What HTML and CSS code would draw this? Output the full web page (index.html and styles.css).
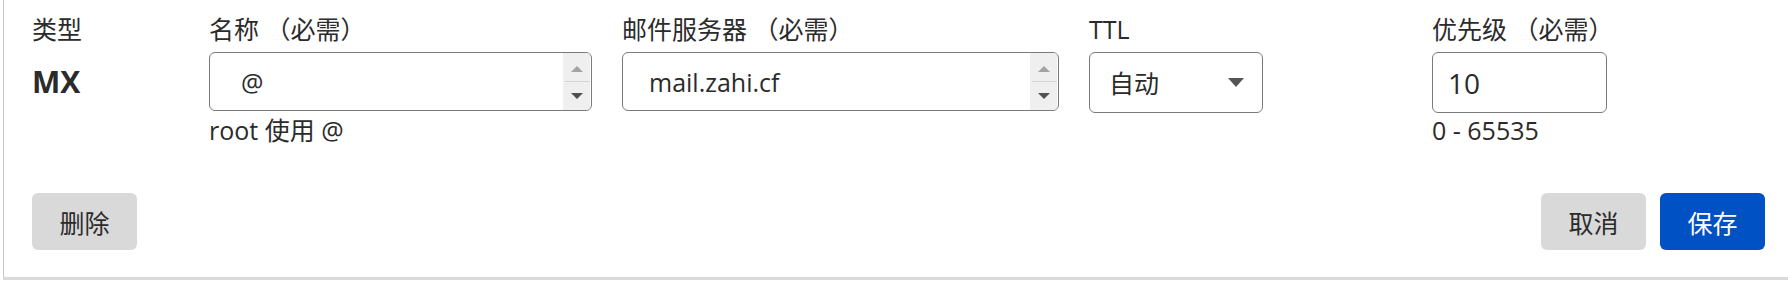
FILE: index.html
```html
<!DOCTYPE html>
<html lang="zh-CN">
<head>
    <meta charset="UTF-8">
    <meta name="viewport" content="width=device-width, initial-scale=1.0">
    <title>编辑 MX 记录</title>
    <link rel="stylesheet" href="styles.css">
</head>
<body>
    <div class="record-card">
        <div class="record-grid">
            <div class="field-label">类型</div>
            <div class="field-label">名称 （必需）</div>
            <div class="field-label">邮件服务器 （必需）</div>
            <div class="field-label">TTL</div>
            <div class="field-label">优先级 （必需）</div>

            <div class="record-type">MX</div>
            <div class="spin-field">
                <input type="text" value="@">
                <div class="spinner">
                    <span class="spin-btn spin-up">
                        <svg width="12" height="6" viewBox="0 0 12 6"><path d="M6 0 L12 6 H0 Z"/></svg>
                    </span>
                    <span class="spin-btn spin-down">
                        <svg width="12" height="6" viewBox="0 0 12 6"><path d="M0 0 H12 L6 6 Z"/></svg>
                    </span>
                </div>
            </div>
            <div class="spin-field spin-field-mail">
                <input type="text" value="mail.zahi.cf">
                <div class="spinner">
                    <span class="spin-btn spin-up">
                        <svg width="12" height="6" viewBox="0 0 12 6"><path d="M6 0 L12 6 H0 Z"/></svg>
                    </span>
                    <span class="spin-btn spin-down">
                        <svg width="12" height="6" viewBox="0 0 12 6"><path d="M0 0 H12 L6 6 Z"/></svg>
                    </span>
                </div>
            </div>
            <div>
                <div class="select-field">
                    <span>自动</span>
                    <svg width="16" height="9" viewBox="0 0 16 9"><path d="M0 0 H16 L8 9 Z"/></svg>
                </div>
            </div>
            <div>
                <input class="text-field" type="text" value="10">
            </div>

            <div></div>
            <div class="field-hint">root 使用 @</div>
            <div></div>
            <div></div>
            <div class="field-hint">0 - 65535</div>
        </div>

        <div class="record-actions">
            <button class="btn">删除</button>
            <div class="action-group">
                <button class="btn">取消</button>
                <button class="btn btn-primary">保存</button>
            </div>
        </div>
    </div>
</body>
</html>
```

FILE: styles.css
```css
:root {
    --text: #2b2b2b;
    --field-border: #7b7b7b;
    --btn-bg: #d9d9d9;
    --accent: #0051c3;
}

html,
body {
    margin: 0;
    overflow: hidden;
    background: #ffffff;
}

body {
    font-family: "Open Sans", "Noto Sans CJK SC", sans-serif;
    font-size: 25px;
    color: var(--text);
}

.record-card {
    margin: 0 -6px 0 3px;
    padding: 12px 28px 27px;
    border-left: 1px solid #c6c6c6;
    border-right: 1px solid #c6c6c6;
    border-bottom: 3px solid #dadada;
    border-bottom-left-radius: 4px;
    box-shadow: 0 1px 0 #b4b4b4;
}

.record-grid {
    display: grid;
    grid-template-columns: 147px 383px 437px 313px 175px;
    column-gap: 30px;
    line-height: 34px;
}

.field-label {
    margin-bottom: 6px;
    white-space: nowrap;
}

.record-type {
    align-self: center;
    font-size: 30px;
    font-weight: 700;
    line-height: 1;
    margin-top: -2px;
}

.spin-field {
    display: flex;
    height: 59px;
    box-sizing: border-box;
    border: 1px solid var(--field-border);
    border-radius: 6px;
    overflow: hidden;
}

.spin-field input {
    flex: 1;
    min-width: 0;
    border: none;
    outline: none;
    padding: 0 0 0 31px;
    font: inherit;
    color: inherit;
    background: transparent;
}

.spin-field-mail input {
    padding-left: 26px;
}

.spinner {
    width: 27px;
    margin-right: 1px;
    background: #efefef;
    display: flex;
    flex-direction: column;
}

.spin-btn {
    flex: 1;
    display: flex;
    align-items: center;
    justify-content: center;
}

.spin-up svg {
    fill: #a3a3a3;
    margin-top: 3px;
}

.spin-down {
    margin-left: 2px;
    border-top: 1px solid #d4d4d4;
}

.spin-down svg {
    fill: #505050;
    margin-left: -2px;
}

.select-field {
    display: flex;
    align-items: center;
    justify-content: space-between;
    width: 174px;
    height: 61px;
    box-sizing: border-box;
    border: 1px solid var(--field-border);
    border-radius: 6px;
    padding: 0 18px 0 19px;
}

.select-field svg {
    fill: #555555;
}

.text-field {
    display: block;
    width: 175px;
    height: 61px;
    box-sizing: border-box;
    border: 1px solid var(--field-border);
    border-radius: 6px;
    padding: 0 0 0 15px;
    font-family: inherit;
    font-size: 28px;
    color: inherit;
    outline: none;
}

.field-hint {
    white-space: nowrap;
}

.record-actions {
    display: flex;
    justify-content: space-between;
    margin-top: 46px;
}

.action-group {
    display: flex;
    gap: 14px;
}

.btn {
    width: 105px;
    height: 57px;
    border: none;
    border-radius: 6px;
    background: var(--btn-bg);
    color: var(--text);
    font-family: inherit;
    font-size: 25px;
    cursor: pointer;
}

.btn-primary {
    background: var(--accent);
    color: #ffffff;
}
```
